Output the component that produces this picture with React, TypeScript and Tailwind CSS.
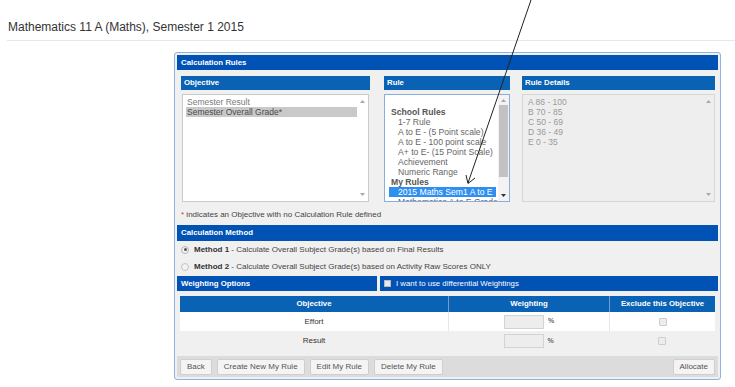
import React from "react";

const Up = ({ c = "#a8a8a8" }: { c?: string }) => (
  <svg width="5" height="3" viewBox="0 0 5 3"><path d="M0 3 L2.5 0 L5 3Z" fill={c} /></svg>
);
const Down = ({ c = "#a8a8a8" }: { c?: string }) => (
  <svg width="5" height="3" viewBox="0 0 5 3"><path d="M0 0 L2.5 3 L5 0Z" fill={c} /></svg>
);

function ColHeader({ children }: { children: React.ReactNode }) {
  return (
    <div className="h-[14px] bg-[#0a62b4] text-white font-bold text-[7.8px] leading-[14px] pl-[3px]">
      {children}
    </div>
  );
}

function Btn({ children }: { children: React.ReactNode }) {
  return (
    <div className="h-[16px] px-[6px] border border-[#cfcfcf] rounded-[2px] bg-[#f4f4f4] text-[8px] leading-[14px] text-[#555]">
      {children}
    </div>
  );
}

function Check({ size = 8 }: { size?: number }) {
  return (
    <div
      className={
        size === 8
          ? "w-[8px] h-[8px] rounded-[1px] border border-[#cdcdcd] bg-[#ededed]"
          : "w-[7px] h-[7px] border border-[#b9b9b9] bg-[#e9e9e9]"
      }
    />
  );
}

export default function App() {
  return (
    <div className="relative w-[735px] h-[387px] bg-white overflow-hidden font-['Liberation_Sans',Arial,sans-serif] text-[#333]">
      <div className="pt-[20px] ml-[7px] pb-[6px] border-b border-[#e8e8e8]">
        <div className="pl-[1px] text-[12px] leading-[14px] text-[#333]">
          Mathematics 11 A (Maths), Semester 1 2015
        </div>
      </div>

      <div className="mt-[11px] ml-[174px] w-[547px] border border-[#8fb3e2] rounded-[3px] bg-[#f0f0f0] p-[2px]">
        <div className="h-[15px] bg-[#0152b5] text-white font-bold text-[7.8px] leading-[15px] pl-[4px]">
          Calculation Rules
        </div>

        <div className="mt-[6px] pl-[4px] flex">
          <div className="w-[189px]">
            <ColHeader>Objective</ColHeader>
            <div className="mt-[4px] ml-[1px] w-[187px] h-[108px] bg-white border border-[#cbcbcb] flex">
              <div className="flex-1 pt-[2px] pl-[3px] text-[8.5px] leading-[10px]">
                <div className="pl-[1px] text-[#7a7a7a]">Semester Result</div>
                <div className="pl-[1px] bg-[#c9c9c9] text-[#4a4a4a]">Semester Overall Grade*</div>
              </div>
              <div className="w-[11px] flex flex-col items-center justify-between pt-[5px] pb-[5px]">
                <Up />
                <Down />
              </div>
            </div>
          </div>

          <div className="ml-[14px] w-[126px]">
            <ColHeader>Rule</ColHeader>
            <div className="mt-[4px] w-[126px] h-[108px] bg-white border border-[#8aace2] flex overflow-hidden">
              <div className="flex-1 pt-[12px] pl-[4px] text-[8.6px] leading-[10px] text-[#666] whitespace-nowrap overflow-hidden">
                <div className="pl-[2px] font-bold text-[#555]">School Rules</div>
                <div className="pl-[9px]">1-7 Rule</div>
                <div className="pl-[9px]">A to E - (5 Point scale)</div>
                <div className="pl-[9px]">A to E - 100 point scale</div>
                <div className="pl-[9px]">A+ to E- (15 Point Scale)</div>
                <div className="pl-[9px]">Achievement</div>
                <div className="pl-[9px]">Numeric Range</div>
                <div className="pl-[2px] font-bold text-[#555]">My Rules</div>
                <div className="pl-[9px] bg-[#2f8ff0] text-white mr-[2px]">2015 Maths Sem1 A to E</div>
                <div className="pl-[9px] h-[5px] overflow-hidden">Mathematics A to E Grades</div>
              </div>
              <div className="w-[11px] flex flex-col items-center pt-[4px] pb-[4px] bg-[#f3f3f3]">
                <Up />
                <div className="mt-[3px] w-[9px] h-[72px] bg-[#c2c2c2]" />
                <div className="flex-1" />
                <Down c="#333" />
              </div>
            </div>
          </div>

          <div className="ml-[12px] w-[193px]">
            <ColHeader>Rule Details</ColHeader>
            <div className="mt-[4px] w-[193px] h-[108px] bg-[#eeeeee] border border-[#d6d6d6] flex">
              <div className="flex-1 pt-[2px] pl-[5px] text-[8.5px] leading-[10px] text-[#9a9a9a]">
                <div>A 86 - 100</div>
                <div>B 70 - 85</div>
                <div>C 50 - 69</div>
                <div>D 36 - 49</div>
                <div>E 0 - 35</div>
              </div>
              <div className="w-[11px] flex flex-col items-center justify-between pt-[5px] pb-[5px]">
                <Up />
                <Down />
              </div>
            </div>
          </div>
        </div>

        <div className="mt-[7px] pl-[4px] text-[8px] leading-[12px] text-[#444]">
          <span className="text-[#e0302a]">*</span> indicates an Objective with no Calculation Rule defined
        </div>

        <div className="mt-[4px] h-[16px] bg-[#0152b5] text-white font-bold text-[7.8px] leading-[16px] pl-[4px]">
          Calculation Method
        </div>

        <div className="h-[17px] flex items-center pl-[4px] text-[8px] text-[#444]">
          <div className="w-[8px] h-[8px] rounded-full border border-[#b5b5b5] bg-[#f2f2f2] flex items-center justify-center">
            <div className="w-[3px] h-[3px] rounded-full bg-[#555]" />
          </div>
          <div className="ml-[5px]">
            <span className="font-bold text-[#333]">Method 1</span> - Calculate Overall Subject Grade(s) based on Final Results
          </div>
        </div>
        <div className="h-[17px] flex items-center pl-[4px] text-[8px] text-[#444]">
          <div className="w-[8px] h-[8px] rounded-full border border-[#c4c4c4] bg-[#f2f2f2]" />
          <div className="ml-[5px]">
            <span className="font-bold text-[#333]">Method 2</span> - Calculate Overall Subject Grade(s) based on Activity Raw Scores ONLY
          </div>
        </div>

        <div className="mt-[1px] h-[15px] flex gap-[3px]">
          <div className="w-[200px] bg-[#0152b5] text-white font-bold text-[7.8px] leading-[15px] pl-[4px]">
            Weighting Options
          </div>
          <div className="flex-1 bg-[#0152b5] flex items-center pl-[4px] text-white text-[7.8px]">
            <Check size={7} />
            <span className="ml-[5px]">I want to use differential Weightings</span>
          </div>
        </div>

        <div className="mt-[5px] ml-[3px] w-[535px]">
          <div className="grid grid-cols-[268px_161px_106px] h-[16px] bg-[#0a62b4] text-white font-bold text-[7.8px] leading-[16px] text-center">
            <div>Objective</div>
            <div className="border-l border-[#6e9bd0]">Weighting</div>
            <div className="border-l border-[#6e9bd0]">Exclude this Objective</div>
          </div>
          <div className="grid grid-cols-[268px_161px_106px] h-[19px] bg-white text-[8px] text-[#333]">
            <div className="flex items-center justify-center">Effort</div>
            <div className="border-l border-[#e6e6e6] flex items-center justify-center gap-[4px]">
              <div className="w-[40px] h-[14px] bg-[#ededed] border border-[#d3d3d3]" />
              <span className="text-[7px] font-bold text-[#666] w-[6px]">%</span>
            </div>
            <div className="border-l border-[#e6e6e6] flex items-center justify-center">
              <Check />
            </div>
          </div>
          <div className="grid grid-cols-[268px_161px_106px] h-[20px] text-[8px] text-[#333]">
            <div className="flex items-center justify-center">Result</div>
            <div className="flex items-center justify-center gap-[4px]">
              <div className="w-[40px] h-[14px] bg-[#ededed] border border-[#d3d3d3]" />
              <span className="text-[7px] font-bold text-[#666] w-[6px]">%</span>
            </div>
            <div className="flex items-center justify-center">
              <Check />
            </div>
          </div>
        </div>

        <div className="mt-[5px] h-[21px] bg-[#dcdcdc] flex items-center px-[3px] gap-[5px]">
          <Btn>Back</Btn>
          <Btn>Create New My Rule</Btn>
          <Btn>Edit My Rule</Btn>
          <Btn>Delete My Rule</Btn>
          <div className="flex-1" />
          <Btn>Allocate</Btn>
        </div>
      </div>

      <svg className="absolute left-0 top-0 pointer-events-none" width="735" height="387" viewBox="0 0 735 387">
        <path d="M531 0 L468 183" stroke="#222" strokeWidth="1" fill="none" />
        <path d="M466 175 L468 183.5 L475 178" stroke="#222" strokeWidth="1" fill="none" />
      </svg>
    </div>
  );
}
